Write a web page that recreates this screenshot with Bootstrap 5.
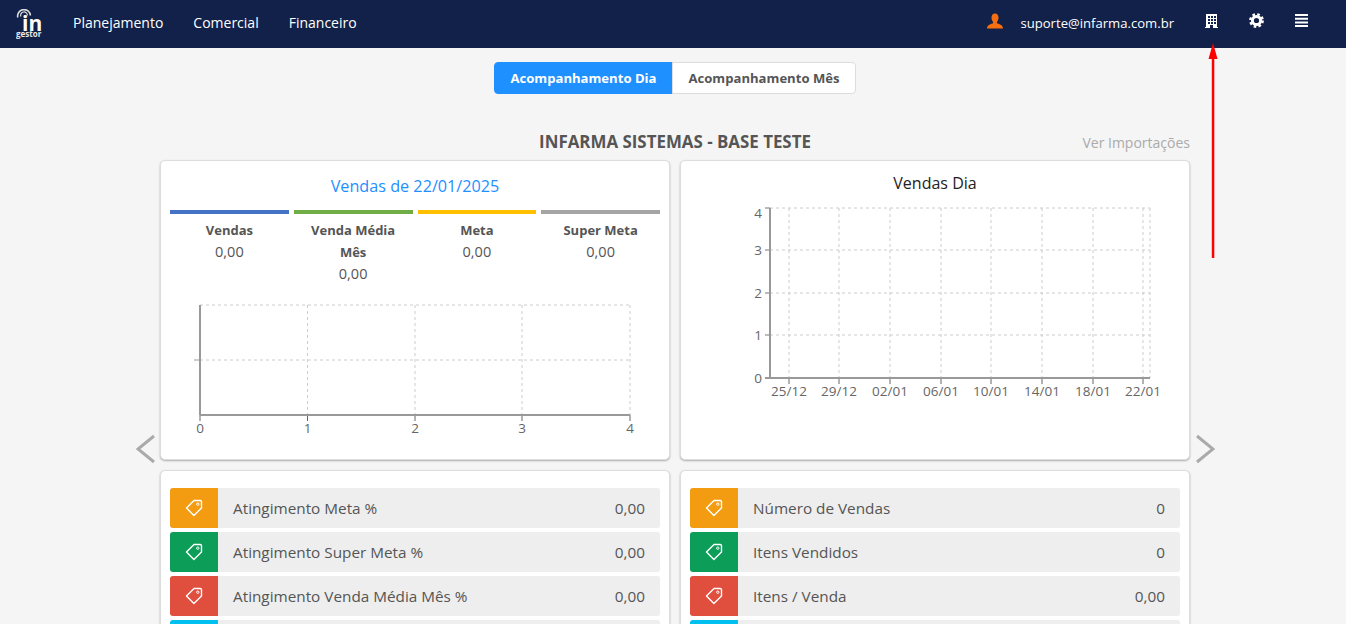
<!DOCTYPE html>
<html lang="pt-BR">
<head>
    <meta charset="UTF-8">
    <meta name="viewport" content="width=device-width, initial-scale=1.0">
    <title>InGestor - Acompanhamento</title>
    <link href="https://cdn.jsdelivr.net/npm/bootstrap@5.3.0/dist/css/bootstrap.min.css" rel="stylesheet">
    <style>
        body {
            font-family: "Open Sans", "Noto Sans", sans-serif;
            background-color: #f5f5f5;
            color: #555;
            font-size: 14.5px;
        }
        .topo {
            height: 48px;
            background-color: #112149;
            padding: 0 38px 0 16px;
        }
        .logo-box {
            width: 27px;
            height: 30px;
            margin-right: 30px;
            line-height: 1;
        }
        .logo-box svg { display: block; }
        .logo-txt { font-weight: 700; font-size: 21px; fill: #fff; }
        .logo-sub { font-weight: 700; font-size: 8px; fill: #e8e8e8; }
        .topo a {
            color: #fff;
            text-decoration: none;
            font-size: 14px;
            margin-right: 30px;
            margin-bottom: 4px;
        }
        .email-topo { color: #fff; font-size: 13.1px; margin: 0 31px 0 17px; }
        .ico-topo { margin-bottom: 7px; }
        .acao-topo { margin-left: 31px; }
        .conteudo {
            width: 1030px;
            margin-left: 160px;
            position: relative;
        }
        .alterna { margin-top: 14px; height: 32px; }
        .alterna .btn {
            font-size: 13.1px;
            font-weight: 700;
            padding: 1px 0 0;
            height: 32px;
            border-radius: 4px;
        }
        .btn-dia { width: 179px; background-color: #1e90ff; border-color: #1e90ff; color: #fff; }
        .btn-mes { width: 184px; background-color: #fff; border-color: #ddd; color: #555; }
        .titulo-linha { margin-top: 33px; margin-bottom: 4px; height: 29px; }
        .titulo-base { font-size: 16.9px; font-weight: 700; color: #555; white-space: nowrap; }
        .ver-imp { color: #aaa; font-size: 14px; padding-top: 2px; }
        .grade { --bs-gutter-x: 10px; --bs-gutter-y: 10px; }
        .painel {
            border: 1px solid #ddd;
            border-radius: 5px;
            box-shadow: 0 1px 2px rgba(0, 0, 0, .3);
        }
        .painel-alto { height: 300px; }
        .tit-vendas { color: #1e90ff; font-size: 16.2px; margin-top: 13px; line-height: 24px; }
        .legenda { padding: 0 9px; margin-top: 12px; gap: 5px; }
        .legenda > div { flex: 1 1 0; }
        .traco { height: 4px; margin-bottom: 6px; }
        .leg-nome { font-weight: 700; font-size: 13px; line-height: 21.5px; padding: 0 10px; }
        .leg-valor { line-height: 22px; margin-top: -.5px; }
        .grafico text { font-family: "Open Sans", "Noto Sans", sans-serif; font-size: 13.5px; fill: #666; }
        .tit-dia { color: #222; font-size: 16px; margin-top: 10px; line-height: 24px; }
        .lista-ind { padding: 17px 9px 0; height: 200px; overflow: hidden; }
        .ind {
            height: 40px;
            margin-bottom: 4px;
            background-color: #eee;
            border-radius: 3px;
            font-size: 15.3px;
            line-height: 24px;
        }
        .ind-ico {
            width: 48px;
            border-radius: 3px 0 0 3px;
            color: #fff;
        }
        .ind-nome { padding-left: 15px; }
        .ind-valor { padding-right: 15px; }
        .ico-laranja { background-color: #f39c12; }
        .ico-verde { background-color: #0c9e58; }
        .ico-vermelho { background-color: #e04e3e; }
        .ico-ciano { background-color: #00c0ef; }
        .seta-car { position: absolute; top: 372px; }
        .seta-esq { left: -24px; }
        .seta-dir { right: -25px; }
        .seta-vermelha { position: absolute; left: 1205px; top: 42px; }
    </style>
</head>
<body class="vh-100 overflow-hidden">

<svg width="0" height="0" class="d-block">
    <symbol id="tag" viewBox="0 0 18 18">
        <path d="M9 1.5 H15.2 Q16.5 1.5 16.5 2.8 V9 L8.9 16.5 L1.5 9 Z" fill="none" stroke="currentColor" stroke-width="1.4" stroke-linejoin="round"/>
        <circle cx="12.8" cy="5.2" r="1.2" fill="none" stroke="currentColor" stroke-width="1"/>
    </symbol>
</svg>

<!-- Barra superior -->
<nav class="topo d-flex align-items-center">
    <div class="logo-box">
        <svg width="27" height="30" viewBox="0 0 27 30">
            <path d="M1.8 8.5 A6.4 6.4 0 1 1 14.4 6.5" fill="none" stroke="#dcdcdc" stroke-width="1.6"/>
            <path d="M4.8 7.5 A3.4 3.4 0 1 1 11.4 6.5" fill="none" stroke="#dcdcdc" stroke-width="1.2"/>
            <text class="logo-txt" x="6" y="22">in</text>
            <text class="logo-sub" x="0" y="28">gestor</text>
        </svg>
    </div>
    <a href="#">Planejamento</a>
    <a href="#">Comercial</a>
    <a href="#">Financeiro</a>

    <div class="ms-auto d-flex align-items-center">
        <svg class="ico-topo" width="16" height="16" viewBox="0 0 16 16"><path d="M8 0.5 C10.4 0.5 11.5 2.4 11.5 4.6 C11.5 6.6 10.8 8 9.9 9 V10.3 C11.5 11 16 11.8 16 15.5 H0 C0 11.8 4.5 11 6.1 10.3 V9 C5.2 8 4.5 6.6 4.5 4.6 C4.5 2.4 5.6 0.5 8 0.5 Z" fill="#f56f10"/></svg>
        <span class="email-topo">suporte@infarma.com.br</span>
        <svg class="ico-topo" width="13" height="14" viewBox="0 0 13 14"><path fill="#fff" fill-rule="evenodd" d="M1 0 H12 V13 H13 V14 H0 V13 H1 Z M3 2 V4 H5 V2 Z M6 2 V4 H8 V2 Z M9 2 V4 H11 V2 Z M3 5 V7 H5 V5 Z M6 5 V7 H8 V5 Z M9 5 V7 H11 V5 Z M3 8 V10 H5 V8 Z M6 8 V10 H8 V8 Z M9 8 V10 H11 V8 Z M5 11 V14 H8 V11 Z"/></svg>
        <svg class="ico-topo acao-topo" width="15" height="15" viewBox="0 0 15 15">
            <circle cx="7.5" cy="7.5" r="4.1" fill="none" stroke="#fff" stroke-width="3"/>
            <circle cx="7.5" cy="7.5" r="6.2" fill="none" stroke="#fff" stroke-width="2.4" stroke-dasharray="2.6 2.27"/>
        </svg>
        <svg class="ico-topo acao-topo" width="13" height="13" viewBox="0 0 13 13"><path fill="#fff" d="M0 0 H13 V2 H0 Z M0 3.7 H13 V5.7 H0 Z M0 7.4 H13 V9.4 H0 Z M0 11 H13 V13 H0 Z"/></svg>
    </div>
</nav>

<svg class="seta-vermelha" width="16" height="218" viewBox="0 0 16 218">
    <path d="M8 1 L3.5 17 H12.5 Z" fill="#f00"/>
    <rect x="6.8" y="16" width="2.5" height="200" fill="#f00"/>
</svg>

<main class="conteudo">
    <div class="alterna d-flex justify-content-center">
        <div class="btn-group" role="group">
            <button type="button" class="btn btn-dia">Acompanhamento Dia</button>
            <button type="button" class="btn btn-mes">Acompanhamento Mês</button>
        </div>
    </div>

    <div class="titulo-linha d-flex align-items-center">
        <div class="flex-fill w-25"></div>
        <div class="titulo-base">INFARMA SISTEMAS - BASE TESTE</div>
        <div class="flex-fill w-25 text-end ver-imp">Ver Importações</div>
    </div>

    <svg class="seta-car seta-esq" width="20" height="30" viewBox="0 0 20 30"><polyline points="18,2 2,15 18,28" fill="none" stroke="#aaa" stroke-width="3"/></svg>
    <svg class="seta-car seta-dir" width="20" height="30" viewBox="0 0 20 30"><polyline points="2,2 18,15 2,28" fill="none" stroke="#aaa" stroke-width="3"/></svg>

    <div class="row grade">
        <div class="col-6">
            <div class="card painel painel-alto">
                <div class="text-center tit-vendas">Vendas de 22/01/2025</div>
                <div class="d-flex legenda text-center">
                    <div>
                        <div class="traco" style="background-color:#4472c4"></div>
                        <div class="leg-nome">Vendas</div>
                        <div class="leg-valor">0,00</div>
                    </div>
                    <div>
                        <div class="traco" style="background-color:#70ad47"></div>
                        <div class="leg-nome">Venda Média Mês</div>
                        <div class="leg-valor">0,00</div>
                    </div>
                    <div>
                        <div class="traco" style="background-color:#ffc000"></div>
                        <div class="leg-nome">Meta</div>
                        <div class="leg-valor">0,00</div>
                    </div>
                    <div>
                        <div class="traco" style="background-color:#a5a5a5"></div>
                        <div class="leg-nome">Super Meta</div>
                        <div class="leg-valor">0,00</div>
                    </div>
                </div>
                <svg id="graf-esq" class="grafico position-absolute top-0 start-0" width="508" height="298"></svg>
            </div>
        </div>
        <div class="col-6">
            <div class="card painel painel-alto">
                <div class="text-center tit-dia">Vendas Dia</div>
                <svg id="graf-dir" class="grafico position-absolute top-0 start-0" width="508" height="298"></svg>
            </div>
        </div>
        <div class="col-6">
            <div class="card painel lista-ind" id="lista-esq"></div>
        </div>
        <div class="col-6">
            <div class="card painel lista-ind" id="lista-dir"></div>
        </div>
    </div>
</main>

<script src="https://cdn.jsdelivr.net/npm/bootstrap@5.3.0/dist/js/bootstrap.bundle.min.js"></script>
<script>
    document.addEventListener('DOMContentLoaded', function () {
        const cores = ['ico-laranja', 'ico-verde', 'ico-vermelho', 'ico-ciano'];
        const listaEsq = [['Atingimento Meta %', '0,00'], ['Atingimento Super Meta %', '0,00'], ['Atingimento Venda Média Mês %', '0,00'], ['', '']];
        const listaDir = [['Número de Vendas', '0'], ['Itens Vendidos', '0'], ['Itens / Venda', '0,00'], ['', '']];

        function montaLista(id, itens) {
            document.getElementById(id).innerHTML = itens.map((item, i) => `
                <div class="ind d-flex align-items-center flex-shrink-0">
                    <div class="ind-ico h-100 d-flex align-items-center justify-content-center ${cores[i]}">
                        <svg width="18" height="18"><use href="#tag"/></svg>
                    </div>
                    <div class="ind-nome flex-grow-1">${item[0]}</div>
                    <div class="ind-valor">${item[1]}</div>
                </div>`).join('');
        }
        montaLista('lista-esq', listaEsq);
        montaLista('lista-dir', listaDir);

        // grade: linhas tracejadas, eixos e rotulos (coordenadas relativas ao card)
        function linha(x1, y1, x2, y2, cor, larg, traco) {
            return `<line x1="${x1}" y1="${y1}" x2="${x2}" y2="${y2}" stroke="${cor}" stroke-width="${larg}"${traco ? ' stroke-dasharray="3 3"' : ''}/>`;
        }
        function rotulo(x, y, txt, ancora) {
            return `<text x="${x}" y="${y}" text-anchor="${ancora}">${txt}</text>`;
        }

        // grafico da esquerda
        let esq = '';
        const xsEsq = [39, 146.5, 254, 361, 469];
        xsEsq.forEach((x, i) => {
            esq += linha(x, 144, x, 254, '#ccc', 1, true);
            esq += linha(x, 254, x, 260, '#666', 1);
            esq += rotulo(x, 272, String(i), 'middle');
        });
        [144, 199].forEach(y => { esq += linha(39, y, 469, y, '#ccc', 1, true); });
        esq += linha(33, 199, 39, 199, '#999', 1);
        esq += linha(39, 144, 39, 254, '#999', 2);
        esq += linha(39, 254, 469, 254, '#999', 2);
        document.getElementById('graf-esq').innerHTML = esq;

        // grafico da direita
        let dir = '';
        const xsDir = [108, 158, 209, 260, 310, 361, 412, 462];
        const datas = ['25/12', '29/12', '02/01', '06/01', '10/01', '14/01', '18/01', '22/01'];
        const ysDir = [217, 174, 132, 89, 47];
        xsDir.forEach((x, i) => {
            dir += linha(x, 47, x, 217, '#ccc', 1, true);
            dir += linha(x, 217, x, 223, '#666', 1);
            dir += rotulo(x, 235, datas[i], 'middle');
        });
        dir += linha(469, 47, 469, 217, '#ccc', 1, true);
        ysDir.forEach((y, i) => {
            dir += linha(89, y, 469, y, '#ccc', 1, true);
            dir += linha(84, y, 89, y, '#777', 1);
            dir += rotulo(81, y + (i === 4 ? 10 : 5), String(i), 'end');
        });
        dir += linha(89, 47, 89, 217, '#999', 2);
        dir += linha(84, 217, 469, 217, '#999', 2);
        document.getElementById('graf-dir').innerHTML = dir;
    });
</script>
</body>
</html>
